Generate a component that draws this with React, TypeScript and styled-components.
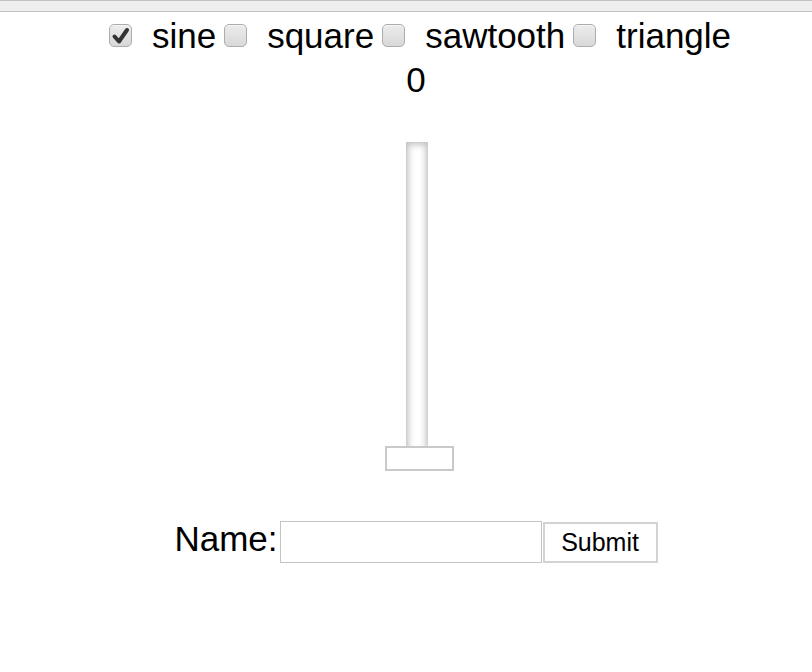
import React, { useState } from "react";
import styled, { createGlobalStyle } from "styled-components";

const GlobalStyle = createGlobalStyle`
  html, body {
    margin: 0;
    padding: 0;
    background: #ffffff;
  }
  body {
    font-family: "Liberation Sans", Arial, Helvetica, sans-serif;
    color: #000;
  }
`;

const TopBar = styled.div`
  height: 10px;
  background: #efefef;
  border-top: 1px solid #c2c2c2;
  border-bottom: 1px solid #c2c2c2;
`;

const Page = styled.div`
  display: flex;
  flex-direction: column;
  align-items: center;
  padding-left: 20px;
`;

const WaveRow = styled.div`
  display: flex;
  align-items: center;
  gap: 8px;
  margin: 4px 0 0 8px;
  height: 39px;
`;

const Option = styled.label`
  display: flex;
  align-items: center;
  cursor: pointer;
  font-size: 35px;
  line-height: 39px;
`;

const Box = styled.span`
  position: relative;
  display: inline-block;
  box-sizing: border-box;
  width: 23px;
  height: 23px;
  border: 1px solid #acacac;
  border-radius: 5px;
  background: linear-gradient(#ececec, #d8d8d8);
  box-shadow: inset 0 1px 0 #f6f6f6;
  margin-right: 20px;

  svg {
    position: absolute;
    left: 1px;
    top: 1px;
  }
`;

const Value = styled.div`
  font-size: 35px;
  line-height: 39px;
  margin-top: 5px;
`;

const Slider = styled.div`
  display: flex;
  flex-direction: column;
  align-items: center;
  margin-top: 43px;
  margin-left: 2px;
`;

const Track = styled.div`
  width: 22px;
  height: 305px;
  box-sizing: border-box;
  background: linear-gradient(
    to right,
    #cfcfcf 0%,
    #f2f2f2 22%,
    #ffffff 40%,
    #ffffff 62%,
    #f0f0f0 80%,
    #d2d2d2 100%
  );
  box-shadow: inset 0 6px 6px -3px #c4c4c4;
`;

const Thumb = styled.div`
  width: 69px;
  height: 25px;
  box-sizing: border-box;
  margin-top: -1px;
  margin-left: 4px;
  border: 2px solid #c9c9c9;
  background: #ffffff;
`;

const Form = styled.form`
  display: flex;
  align-items: flex-start;
  margin-top: 48px;
`;

const NameLabel = styled.label`
  font-size: 35px;
  line-height: 39px;
  margin-right: 2px;
`;

const TextInput = styled.input`
  box-sizing: border-box;
  width: 262px;
  height: 42px;
  margin: 2px 1px 0 0;
  border: 1px solid #c4c4c4;
  padding: 0 6px;
  font-size: 20px;
  font-family: "Liberation Sans", Arial, sans-serif;
  outline: none;
`;

const SubmitButton = styled.button`
  box-sizing: border-box;
  width: 115px;
  height: 41px;
  margin-top: 3px;
  border: 2px solid #d3d3d3;
  background: #ffffff;
  font-family: "Liberation Sans", Arial, sans-serif;
  font-size: 25px;
  color: #000;
  padding: 0;
`;

const Check = () => (
  <svg width="21" height="21" viewBox="0 0 21 21">
    <path
      d="M3.5 10.5 L8 15.5 L16 4"
      fill="none"
      stroke="#333333"
      strokeWidth="4"
      strokeLinecap="round"
      strokeLinejoin="round"
    />
  </svg>
);

const waves = ["sine", "square", "sawtooth", "triangle"];

const App = () => {
  const [wave, setWave] = useState("sine");
  const [name, setName] = useState("");

  return (
    <>
      <GlobalStyle />
      <TopBar />
      <Page>
        <WaveRow>
          {waves.map((w) => (
            <Option key={w} onClick={() => setWave(w)}>
              <Box>{wave === w && <Check />}</Box>
              {w}
            </Option>
          ))}
        </WaveRow>
        <Value>0</Value>
        <Slider>
          <Track />
          <Thumb />
        </Slider>
        <Form onSubmit={(e) => e.preventDefault()}>
          <NameLabel htmlFor="name">Name:</NameLabel>
          <TextInput
            id="name"
            value={name}
            onChange={(e) => setName(e.target.value)}
          />
          <SubmitButton type="submit">Submit</SubmitButton>
        </Form>
      </Page>
    </>
  );
};

export default App;
